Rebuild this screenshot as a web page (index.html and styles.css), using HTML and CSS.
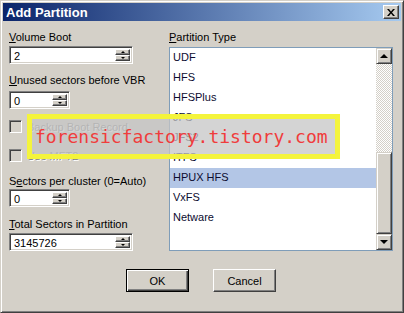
FILE: index.html
```html
<!DOCTYPE html>
<html lang="en">
<head>
  <meta charset="UTF-8" />
  <title>Add Partition</title>
  <link rel="stylesheet" href="styles.css">
</head>
<body>
  <div class="window">
    <div class="titlebar">
      <span class="title">Add Partition</span>
      <button class="close-btn" type="button">
        <svg width="8" height="7" viewBox="0 0 8 7"><path d="M0 0h2l2 2.5L6 0h2L5 3.5 8 7H6L4 4.5 2 7H0l3-3.5z" fill="#000"/></svg>
      </button>
    </div>

    <div class="dialog">
      <div class="main">
        <!-- Left column -->
        <div class="left-col">
          <div class="field-label lbl-volume"><u>V</u>olume Boot</div>
          <div class="spin spin-wide inp-volume">
            <span class="spin-value">2</span>
            <span class="spin-btns"><span class="spin-btn up"></span><span class="spin-btn down"></span></span>
          </div>

          <div class="field-label lbl-unused"><u>U</u>nused sectors before VBR</div>
          <div class="spin spin-narrow inp-unused">
            <span class="spin-value">0</span>
            <span class="spin-btns"><span class="spin-btn up"></span><span class="spin-btn down"></span></span>
          </div>

          <div class="check-row chk-backup">
            <span class="checkbox"></span>
            <span class="check-label">Backup Boot Record</span>
          </div>
          <div class="check-row chk-mft">
            <span class="checkbox"></span>
            <span class="check-label">Use MFT2</span>
          </div>

          <div class="field-label lbl-cluster">S<u>e</u>ctors per cluster (0=Auto)</div>
          <div class="spin spin-narrow inp-cluster">
            <span class="spin-value">0</span>
            <span class="spin-btns"><span class="spin-btn up"></span><span class="spin-btn down"></span></span>
          </div>

          <div class="field-label lbl-total"><u>T</u>otal Sectors in Partition</div>
          <div class="spin spin-wide inp-total">
            <span class="spin-value">3145726</span>
            <span class="spin-btns"><span class="spin-btn up"></span><span class="spin-btn down"></span></span>
          </div>
        </div>

        <!-- Right column -->
        <div class="right-col">
          <div class="field-label"><u>P</u>artition Type</div>
          <div class="listbox">
            <ul class="list-items">
              <li>UDF</li>
              <li>HFS</li>
              <li>HFSPlus</li>
              <li>JFS</li>
              <li>JFS2</li>
              <li>ITFS</li>
              <li class="selected">HPUX HFS</li>
              <li>VxFS</li>
              <li>Netware</li>
            </ul>
            <div class="scrollbar">
              <span class="scroll-btn"><span class="arrow-up"></span></span>
              <span class="scroll-track"></span>
              <span class="scroll-thumb"></span>
              <span class="scroll-btn"><span class="arrow-down"></span></span>
            </div>
          </div>
        </div>
      </div>

      <div class="buttons">
        <button class="btn default" type="button">OK</button>
        <button class="btn" type="button">Cancel</button>
      </div>
    </div>

    <div class="watermark">forensicfactory.tistory.com</div>
  </div>
</body>
</html>
```

FILE: styles.css
```css
* {
  box-sizing: border-box;
}

body {
  margin: 0;
  background: #d4d0c8;
  font-family: "Liberation Sans", Arial, sans-serif;
  font-size: 11px;
  color: #000;
}

.window {
  position: relative;
  width: 404px;
  height: 313px;
  background: #d4d0c8;
  border: 1px solid;
  border-color: #d4d0c8 #404040 #404040 #d4d0c8;
  box-shadow: inset 1px 1px #ffffff, inset -1px -1px #808080;
  padding: 2px;
  display: flex;
  flex-direction: column;
}

/* Title bar */
.titlebar {
  height: 18px;
  background: linear-gradient(to right, #0a246a, #a6caf0);
  display: flex;
  align-items: center;
  justify-content: space-between;
  padding: 0 2px 0 3px;
}

.title {
  color: #ffffff;
  font-weight: bold;
  font-size: 13px;
}

.close-btn {
  width: 16px;
  height: 14px;
  padding: 0;
  background: #d4d0c8;
  border: 1px solid;
  border-color: #ffffff #404040 #404040 #ffffff;
  box-shadow: inset -1px -1px #808080;
  display: flex;
  align-items: center;
  justify-content: center;
}

/* Dialog body */
.dialog {
  flex: 1;
  padding: 10px 8px 0 6px;
}

.main {
  display: flex;
  justify-content: space-between;
}

.left-col {
  width: 158px;
  display: flex;
  flex-direction: column;
  align-items: flex-start;
}

.field-label {
  line-height: 13px;
  white-space: nowrap;
}

.lbl-unused { margin-top: 10px; }
.lbl-cluster { margin-top: 13px; }
.lbl-total { margin-top: 11px; }

.inp-volume { margin-top: 2px; }
.inp-unused { margin-top: 4px; }
.inp-cluster { margin-top: 1px; }
.inp-total { margin-top: 2px; }

/* Spin edit */
.spin {
  height: 18px;
  background: #ffffff;
  border: 1px solid;
  border-color: #808080 #ffffff #ffffff #808080;
  box-shadow: inset 1px 1px #404040, inset -1px -1px #d4d0c8;
  padding: 2px;
  display: flex;
}

.spin-wide { width: 124px; }
.spin-narrow { width: 61px; }

.spin-value {
  flex: 1;
  padding-left: 2px;
  line-height: 14px;
}

.spin-btns {
  width: 15px;
  display: flex;
  flex-direction: column;
}

.spin-btn {
  flex: 1;
  background: #d4d0c8;
  border: 1px solid;
  border-color: #ffffff #404040 #404040 #ffffff;
  box-shadow: inset -1px -1px #808080;
  display: flex;
  align-items: center;
  justify-content: center;
}

.spin-btn.up::after {
  content: "";
  border-left: 2px solid transparent;
  border-right: 2px solid transparent;
  border-bottom: 2px solid #000;
}

.spin-btn.down::after {
  content: "";
  border-left: 2px solid transparent;
  border-right: 2px solid transparent;
  border-top: 2px solid #000;
}

/* Check boxes */
.check-row {
  display: flex;
  align-items: center;
  gap: 5px;
  height: 13px;
}

.chk-backup { margin-top: 11px; }
.chk-mft { margin-top: 16px; }

.checkbox {
  width: 13px;
  height: 13px;
  background: #d4d0c8;
  border: 1px solid;
  border-color: #808080 #ffffff #ffffff #808080;
  box-shadow: inset 1px 1px #404040, inset -1px -1px #d4d0c8;
}

.check-label {
  color: #808080;
  text-shadow: 1px 1px #ffffff;
  white-space: nowrap;
}

/* List box */
.right-col {
  width: 224px;
}

.listbox {
  margin-top: 3px;
  height: 204px;
  background: #ffffff;
  border: 1px solid #7f9db9;
  display: flex;
}

.list-items {
  flex: 1;
  list-style: none;
  margin: 0;
  padding: 0;
}

.list-items li {
  height: 20px;
  line-height: 19px;
  padding-left: 3px;
  color: #0c0c30;
}

.list-items li.selected {
  background: #b3c6e6;
}

.scrollbar {
  width: 16px;
  display: flex;
  flex-direction: column;
}

.scroll-btn {
  height: 16px;
  background: #d4d0c8;
  border: 1px solid;
  border-color: #d4d0c8 #404040 #404040 #d4d0c8;
  box-shadow: inset 1px 1px #ffffff, inset -1px -1px #808080;
  display: flex;
  align-items: center;
  justify-content: center;
}

.arrow-up {
  border-left: 4px solid transparent;
  border-right: 4px solid transparent;
  border-bottom: 4px solid #000;
}

.arrow-down {
  border-left: 4px solid transparent;
  border-right: 4px solid transparent;
  border-top: 4px solid #000;
}

.scroll-track {
  height: 88px;
  background-image: conic-gradient(#ffffff 25%, #d4d0c8 0 50%, #ffffff 0 75%, #d4d0c8 0);
  background-size: 2px 2px;
}

.scroll-thumb {
  flex: 1;
  background: #d4d0c8;
  border: 1px solid;
  border-color: #d4d0c8 #404040 #404040 #d4d0c8;
  box-shadow: inset 1px 1px #ffffff, inset -1px -1px #808080;
}

/* Buttons */
.buttons {
  margin-top: 18px;
  display: flex;
  justify-content: center;
  gap: 24px;
}

.btn {
  width: 63px;
  height: 23px;
  padding: 0;
  font-family: "Liberation Sans", Arial, sans-serif;
  font-size: 11px;
  color: #000;
  background: #d4d0c8;
  border: 1px solid;
  border-color: #ffffff #404040 #404040 #ffffff;
  box-shadow: inset -1px -1px #808080;
}

.btn.default {
  border: 1px solid #000;
  box-shadow: inset 1px 1px #ffffff, inset -1px -1px #404040, inset -2px -2px #808080;
}

/* Watermark overlay */
.watermark {
  position: absolute;
  left: 26px;
  top: 113px;
  width: 313px;
  height: 45px;
  border: 5px solid #f4f43c;
  background: rgba(197, 197, 197, 0.75);
  padding-left: 3px;
  font-family: "DejaVu Sans Mono", "Liberation Mono", monospace;
  font-size: 18px;
  line-height: 35px;
  color: #f03c3c;
  white-space: nowrap;
}
```
